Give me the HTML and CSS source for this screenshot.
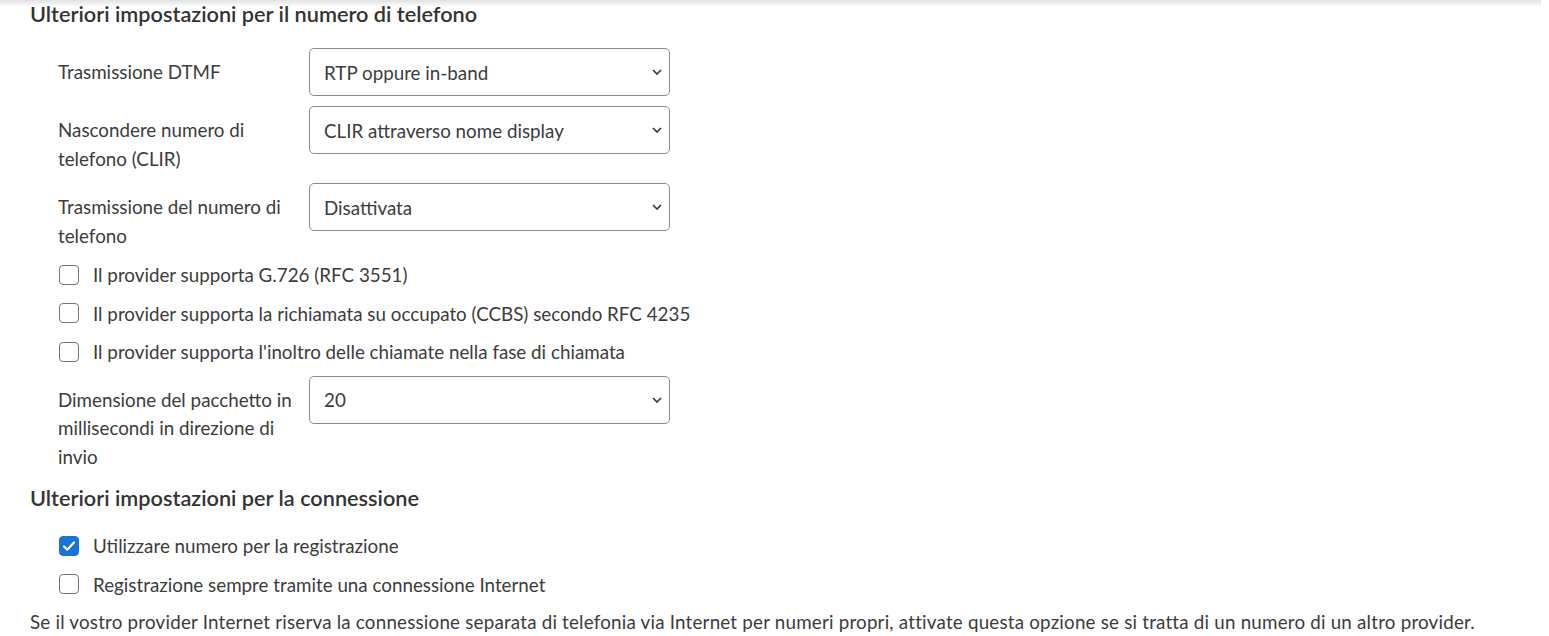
FILE: index.html
```html
<!DOCTYPE html>
<html lang="it">

<head>
    <meta charset="UTF-8">
    <meta name="viewport" content="width=device-width, initial-scale=1.0">
    <title>Impostazioni numero di telefono</title>
    <link rel="stylesheet" href="styles.css">
</head>

<body>
    <div class="topshadow"></div>
    <div class="page">
        <h2 class="section-title">Ulteriori impostazioni per il numero di telefono</h2>
        <div class="fields">
            <div class="field-row">
                <label class="field-label" for="dtmf">Trasmissione DTMF</label>
                <div class="select-wrap">
                    <select id="dtmf" class="select">
                        <option>RTP oppure in-band</option>
                    </select>
                    <svg class="chevron" viewBox="0 0 10 6" width="10" height="6"><path d="M1 1l4 4 4-4" fill="none" stroke="#333" stroke-width="1.6"/></svg>
                </div>
            </div>
            <div class="field-row">
                <label class="field-label" for="clir">Nascondere numero di telefono (CLIR)</label>
                <div class="select-wrap">
                    <select id="clir" class="select">
                        <option>CLIR attraverso nome display</option>
                    </select>
                    <svg class="chevron" viewBox="0 0 10 6" width="10" height="6"><path d="M1 1l4 4 4-4" fill="none" stroke="#333" stroke-width="1.6"/></svg>
                </div>
            </div>
            <div class="field-row">
                <label class="field-label" for="clip">Trasmissione del numero di telefono</label>
                <div class="select-wrap">
                    <select id="clip" class="select">
                        <option>Disattivata</option>
                    </select>
                    <svg class="chevron" viewBox="0 0 10 6" width="10" height="6"><path d="M1 1l4 4 4-4" fill="none" stroke="#333" stroke-width="1.6"/></svg>
                </div>
            </div>

            <label class="check-row">
                <input type="checkbox" class="check">
                <span>Il provider supporta G.726 (RFC 3551)</span>
            </label>
            <label class="check-row">
                <input type="checkbox" class="check">
                <span>Il provider supporta la richiamata su occupato (CCBS) secondo RFC 4235</span>
            </label>
            <label class="check-row">
                <input type="checkbox" class="check">
                <span>Il provider supporta l'inoltro delle chiamate nella fase di chiamata</span>
            </label>

            <div class="field-row">
                <label class="field-label" for="ptime">Dimensione del pacchetto in millisecondi in direzione di invio</label>
                <div class="select-wrap">
                    <select id="ptime" class="select">
                        <option>20</option>
                    </select>
                    <svg class="chevron" viewBox="0 0 10 6" width="10" height="6"><path d="M1 1l4 4 4-4" fill="none" stroke="#333" stroke-width="1.6"/></svg>
                </div>
            </div>
        </div>

        <h2 class="section-title second">Ulteriori impostazioni per la connessione</h2>
        <div class="fields checks">
            <label class="check-row">
                <input type="checkbox" class="check" checked>
                <span>Utilizzare numero per la registrazione</span>
            </label>
            <label class="check-row">
                <input type="checkbox" class="check">
                <span>Registrazione sempre tramite una connessione Internet</span>
            </label>
        </div>
        <p class="hint">Se il vostro provider Internet riserva la connessione separata di telefonia via Internet per numeri propri, attivate questa opzione se si tratta di un numero di un altro provider.</p>
    </div>
</body>

</html>
```

FILE: styles.css
```css
body {
    margin: 0;
    background: #fff;
    color: #3c3c3c;
    font-family: Lato, "Noto Sans", sans-serif;
    font-size: 18.8px;
}

.topshadow {
    position: absolute;
    top: 0;
    left: 0;
    right: 8px;
    height: 7px;
    background: linear-gradient(#e2e2e2, rgba(255, 255, 255, 0));
}

.page {
    padding: 0 30px;
}

.section-title {
    margin: 0;
    font-size: 21.7px;
    font-weight: 600;
    line-height: 28px;
    color: #333;
}

.section-title.second {
    margin-top: 13px;
}

.fields {
    padding-left: 28px;
    margin-top: 20px;
}

.fields.checks {
    margin-top: 19px;
}

.field-row {
    display: flex;
    align-items: flex-start;
    margin-bottom: 10px;
}

.field-label {
    width: 240px;
    margin-right: 11px;
    padding-top: 10px;
    line-height: 28.5px;
}

.select-wrap {
    position: relative;
}

.select {
    appearance: none;
    -webkit-appearance: none;
    width: 361px;
    height: 48px;
    padding: 0 30px 0 14px;
    border: 1px solid #8c8c8c;
    border-radius: 5px;
    background: #fff;
    color: #3c3c3c;
    font-family: inherit;
    font-size: 18.8px;
}

.chevron {
    position: absolute;
    right: 8px;
    top: 21px;
    pointer-events: none;
}

.check-row {
    display: flex;
    align-items: center;
    height: 29px;
    margin-bottom: 9.5px;
}

.check {
    appearance: none;
    -webkit-appearance: none;
    width: 20px;
    height: 20px;
    margin: 0 14px 0 1px;
    border: 1.5px solid #767676;
    border-radius: 4px;
    background: #fff;
}

.check:checked {
    border-color: #1a73d9;
    background: #1a73d9 url("data:image/svg+xml,%3Csvg xmlns='http://www.w3.org/2000/svg' viewBox='0 0 20 20'%3E%3Cpath d='M4.5 10.5l3.6 3.6 7.4-8' fill='none' stroke='%23fff' stroke-width='2.4' stroke-linecap='round' stroke-linejoin='round'/%3E%3C/svg%3E") center / 18px no-repeat;
}

.hint {
    margin: 5px 0 0;
    line-height: 28px;
    letter-spacing: 0.2px;
}
```
